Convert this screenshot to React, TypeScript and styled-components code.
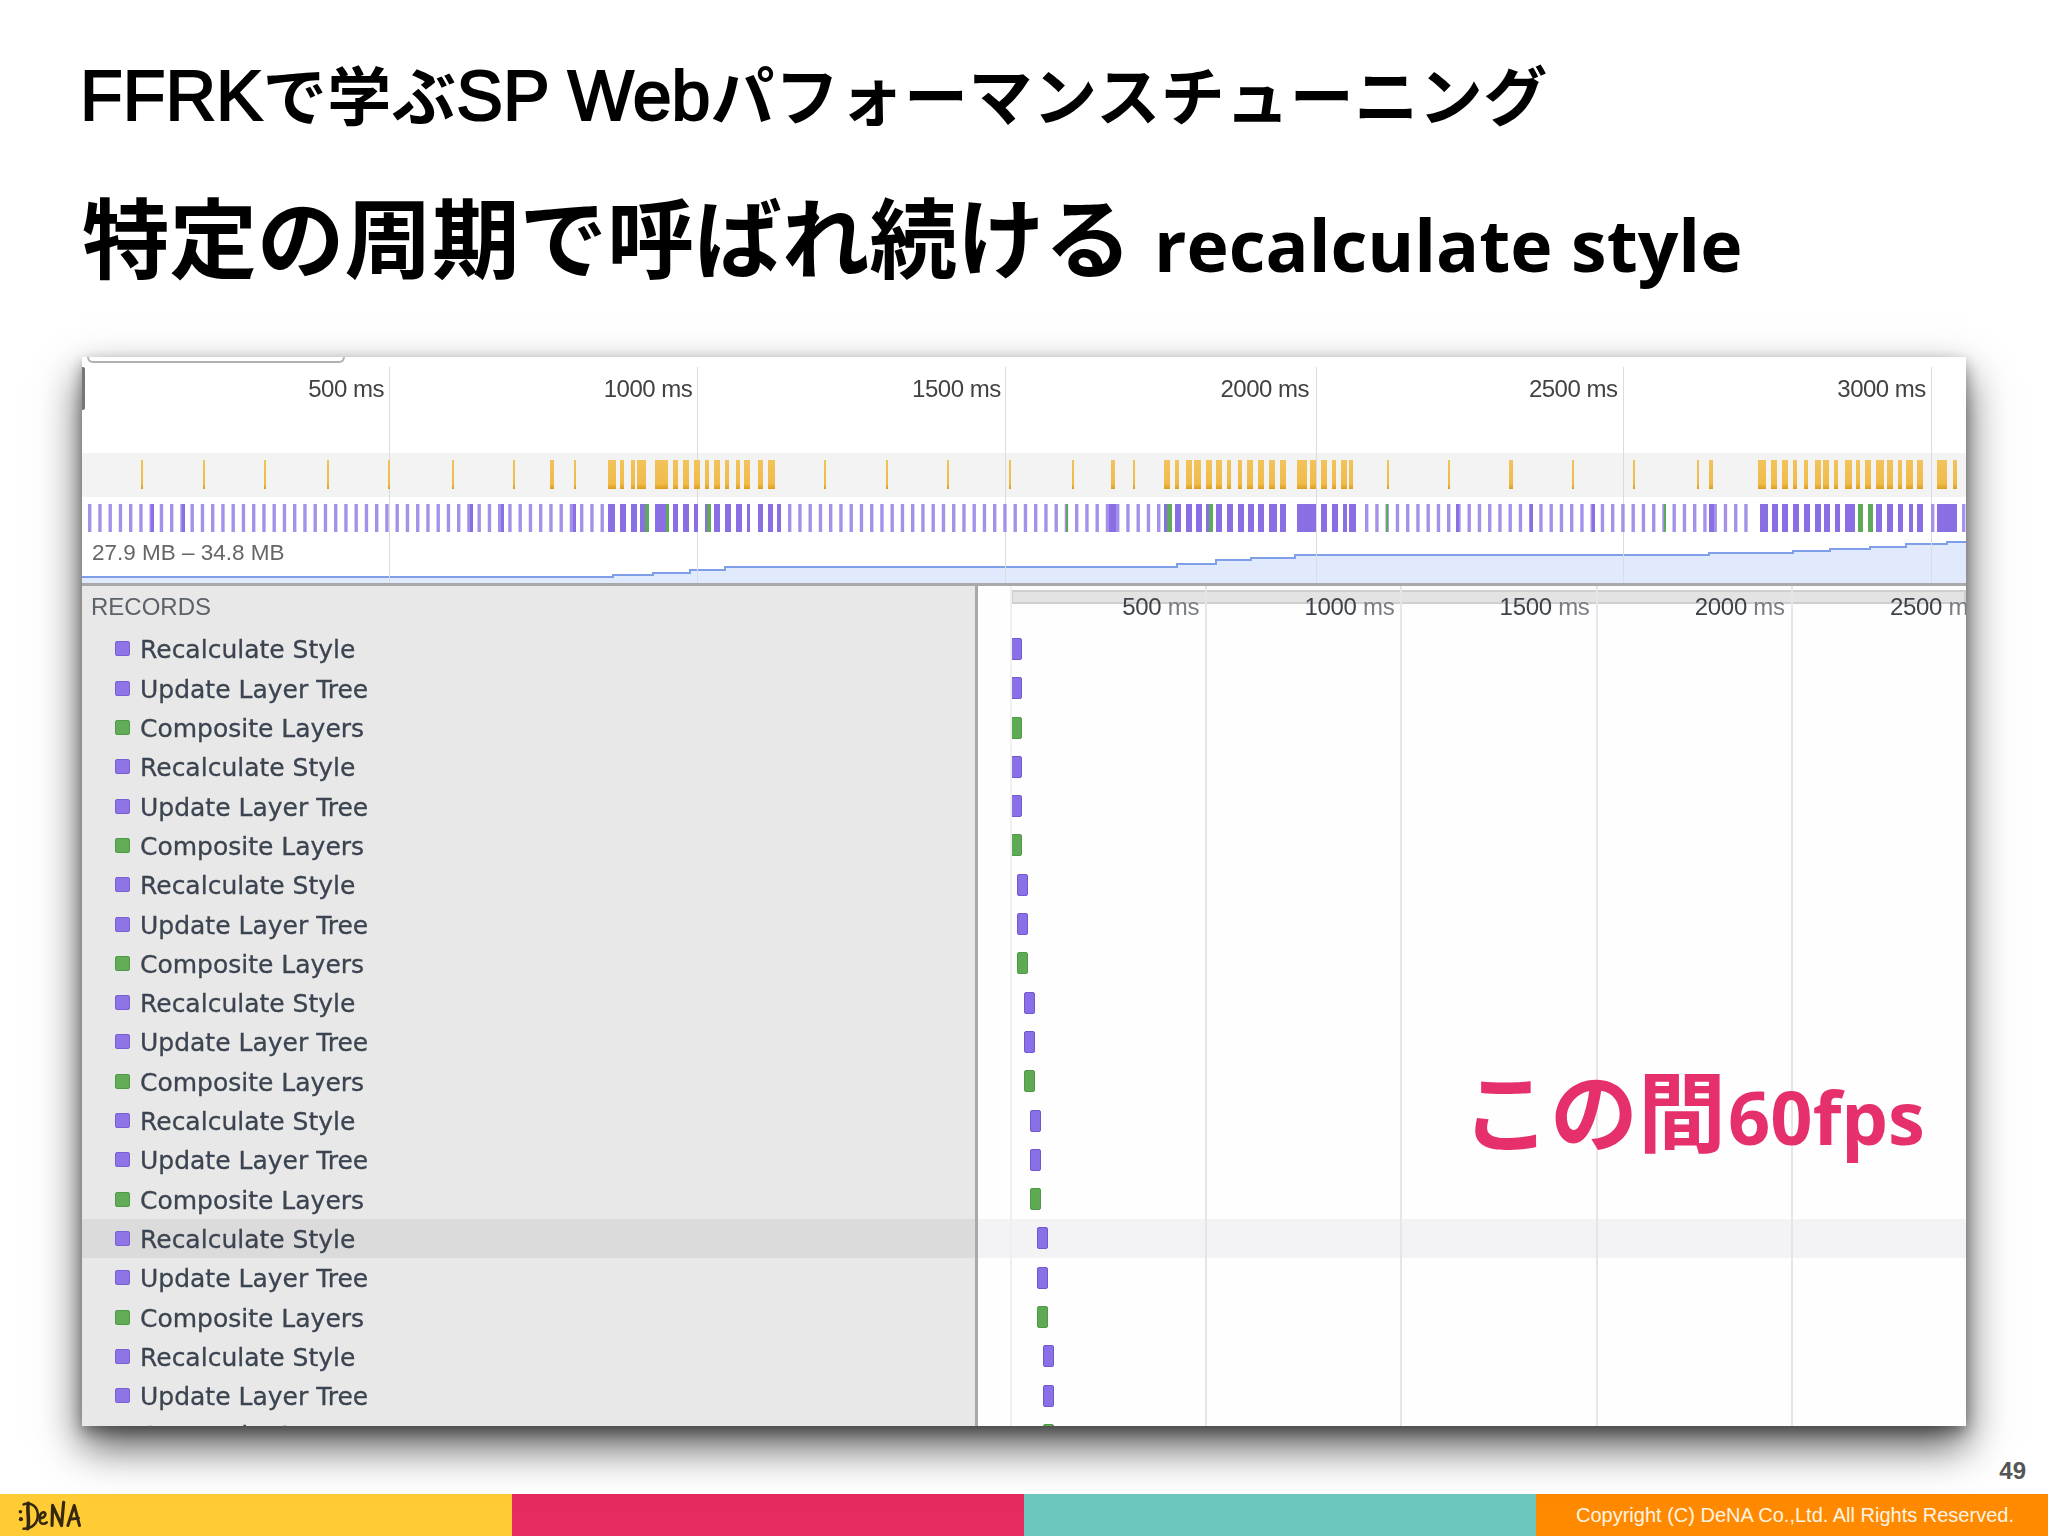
import styled, { createGlobalStyle } from 'styled-components';

const GlobalStyle = createGlobalStyle`
  html, body {
    margin: 0;
    background: #fff;
  }
`;

const JP = `"Noto Sans CJK JP", sans-serif`;

const Page = styled.div`
  width: 2048px;
  height: 1536px;
  display: flex;
  flex-direction: column;
  overflow: hidden;
  background: #fff;
`;

const Slide = styled.main`
  flex: 1;
  padding: 47px 82px 0;
  display: flex;
  flex-direction: column;
`;

const DeckTitle = styled.h1`
  margin: 0 0 42px -2px;
  height: 90px;
  font: 700 64px/90px ${JP};
  letter-spacing: 0.5px;
  color: #000;
  white-space: nowrap;
`;

const DeckLatin = styled.span`
  font: 400 70px/90px "Liberation Sans", sans-serif;
  letter-spacing: 0;
  -webkit-text-stroke: 2px #000;
`;

const SlideTitle = styled.h2`
  margin: 0 0 68px 0;
  height: 110px;
  font: 700 87.5px/110px ${JP};
  color: #000;
  white-space: nowrap;
`;

const TitleLatin = styled.span`
  font: 700 71.5px/110px "Open Sans", sans-serif;
  margin-left: 22px;
`;

const Panel = styled.section`
  position: relative;
  width: 1884px;
  height: 1069px;
  display: flex;
  flex-direction: column;
  background: #fff;
  box-shadow: 0 20px 40px rgba(0, 0, 0, 0.68), 0 6px 14px rgba(0, 0, 0, 0.35);
  filter: blur(0.45px);
  font-family: "Liberation Sans", sans-serif;
`;

const PanelClip = styled.div`
  flex: 1;
  display: flex;
  flex-direction: column;
  overflow: hidden;
`;

const TabEdge = styled.div`
  position: absolute;
  left: 5px;
  top: 0;
  width: 258px;
  height: 6px;
  border: 2px solid #b0b0b0;
  border-top: 0;
  border-radius: 0 0 6px 6px;
  box-sizing: border-box;
`;

const EdgeHandle = styled.div`
  position: absolute;
  left: 0;
  top: 10px;
  width: 3px;
  height: 43px;
  background: #777;
  border-radius: 0 2px 2px 0;
`;

const Overview = styled.div`
  position: relative;
  height: 226px;
  flex: none;
  border-bottom: 3px solid #a9a9a9;
`;

const OverviewChart = styled.svg`
  position: absolute;
  inset: 0;
  display: block;
`;

const OverviewScale = styled.div`
  position: relative;
  display: flex;
  padding-top: 21px;
`;

const OverviewTick = styled.div`
  flex: none;
  width: 308.4px;
  padding-right: 6.5px;
  box-sizing: border-box;
  text-align: right;
  font-size: 24px;
  line-height: 22px;
  letter-spacing: -0.5px;
  color: #424242;
`;

const MemoryRange = styled.div`
  position: absolute;
  left: 10px;
  top: 183px;
  font-size: 22.5px;
  line-height: 26px;
  color: #666;
`;

const Lower = styled.div`
  flex: 1;
  display: flex;
  min-height: 0;
`;

const Sidebar = styled.div`
  flex: none;
  width: 896px;
  background: #e8e8e8;
  border-right: 3px solid #a9a9a9;
  box-sizing: border-box;
`;

const RecordsHeading = styled.div`
  height: 43.35px;
  padding: 3px 0 0 9px;
  box-sizing: border-box;
  font-size: 24px;
  line-height: 36px;
  color: #5c6269;
`;

const RecordRow = styled.div<{ $selected: boolean }>`
  height: 39.3px;
  display: flex;
  align-items: center;
  gap: 10px;
  padding-left: 33px;
  background: ${(p) => (p.$selected ? '#dcdbdc' : 'transparent')};
  font: 25px "DejaVu Sans", sans-serif;
  -webkit-text-stroke: 0.3px #3b4450;
  color: #3b4450;
`;

const RecordLabel = styled.span`
  padding-top: 2px;
`;

const Swatch = styled.span<{ $kind: Kind }>`
  flex: none;
  width: 15px;
  height: 15px;
  box-sizing: border-box;
  border-radius: 2px;
  border: 1px solid ${(p) => (p.$kind === 'paint' ? '#4f9a47' : '#7860d2')};
  background: ${(p) => (p.$kind === 'paint' ? '#62ac58' : '#8e74e6')};
`;

const Timeline = styled.div`
  position: relative;
  flex: 1;
  min-width: 0;
  overflow: hidden;
  background: #fefefe;
`;

const RulerBar = styled.div`
  height: 14px;
  margin: 4px 0 25.35px 33px;
  background: #e3e3e3;
  border: 2px solid #cfcfcf;
  box-sizing: border-box;
`;

const Lane = styled.div<{ $selected: boolean }>`
  height: 39.3px;
  display: flex;
  align-items: center;
  background: ${(p) => (p.$selected ? '#f3f2f5' : 'transparent')};
`;

const EventBar = styled.span<{ $kind: Kind; $offset: number }>`
  width: 11px;
  height: 22px;
  margin-left: ${(p) => p.$offset}px;
  box-sizing: border-box;
  border-radius: 2px;
  border: 1px solid ${(p) => (p.$kind === 'paint' ? '#4f9a47' : '#7258d0')};
  background: ${(p) => (p.$kind === 'paint' ? '#5ea954' : '#8a70e6')};
`;

const TimelineGrid = styled.div`
  position: absolute;
  left: 32px;
  top: 0;
  bottom: 0;
  display: flex;
  border-left: 2px solid #efefef;
`;

const GridCell = styled.div`
  flex: none;
  width: 195.2px;
  box-sizing: border-box;
  border-right: 2px solid #e6e5e8;
  padding: 8px 6px 0 0;
  text-align: right;
  font-size: 24px;
  line-height: 26px;
  letter-spacing: -0.3px;
  color: #3f444b;
  white-space: nowrap;
`;

const GridUnit = styled.span`
  color: #7a7d84;
`;

const Callout = styled.div`
  position: absolute;
  left: 484px;
  top: 466px;
  display: flex;
  align-items: baseline;
  color: #e5306c;
  font: 700 88px/110px ${JP};
  white-space: nowrap;
`;

const CalloutLatin = styled.span`
  font: 700 74px/110px "Open Sans", sans-serif;
  margin-left: 2px;
`;

const PageNumber = styled.div`
  align-self: flex-end;
  margin: 31px -60px 0 0;
  font: 700 24px/28px "Liberation Sans", sans-serif;
  color: #555;
`;

const Footer = styled.footer`
  flex: none;
  height: 42px;
  display: grid;
  grid-template-columns: repeat(4, 512px);
`;

const FooterBlock = styled.div<{ $color: string }>`
  display: flex;
  align-items: center;
  background: ${(p) => p.$color};
`;

const Logo = styled.svg`
  display: block;
  margin: 1px 0 0 6px;
`;

const Copyright = styled.div`
  margin-left: 40px;
  font: 20px "Liberation Sans", sans-serif;
  color: #fff4e4;
  white-space: nowrap;
`;

type Kind = 'script' | 'paint';
type Span = [number, number];

const yellowSpans: Span[] = [
  [141, 143], [203, 205], [264, 266], [327, 329], [388, 390], [452, 454], [513, 515], [550, 554], [574, 576],
  [608, 616], [620, 624], [631, 635], [637, 646], [655, 668], [673, 678], [683, 689], [694, 700], [705, 709],
  [714, 720], [725, 729], [736, 740], [744, 750], [758, 763], [768, 775],
  [824, 826], [886, 888], [947, 949], [1009, 1011], [1072, 1074], [1111, 1115], [1133, 1135],
  [1164, 1170], [1175, 1179], [1186, 1192], [1194, 1201], [1206, 1212], [1216, 1222], [1227, 1231], [1238, 1242],
  [1247, 1253], [1258, 1264], [1269, 1275], [1280, 1286], [1297, 1307], [1310, 1316], [1321, 1327], [1332, 1336],
  [1341, 1347], [1349, 1353],
  [1387, 1389], [1448, 1450], [1509, 1513], [1572, 1574], [1633, 1635], [1697, 1699], [1709, 1713],
  [1758, 1766], [1771, 1777], [1782, 1788], [1793, 1797], [1804, 1808], [1815, 1821], [1823, 1829], [1834, 1838],
  [1845, 1852], [1856, 1860], [1865, 1871], [1876, 1884], [1887, 1893], [1898, 1902], [1906, 1913], [1917, 1923],
  [1937, 1947], [1953, 1957],
];

const purpleSpans: Span[] = [
  [608, 615], [620, 626], [631, 637], [640, 645], [655, 666], [673, 678], [683, 689], [694, 698], [705, 707],
  [714, 720], [725, 731], [736, 742], [747, 750], [758, 763], [768, 773], [777, 781],
  [1164, 1167], [1175, 1181], [1186, 1192], [1196, 1202], [1206, 1209], [1216, 1222], [1227, 1233], [1238, 1244],
  [1248, 1254], [1258, 1264], [1269, 1277], [1280, 1286], [1297, 1316], [1321, 1327], [1332, 1338], [1343, 1347],
  [1349, 1356],
  [1760, 1768], [1772, 1778], [1782, 1788], [1793, 1799], [1804, 1810], [1815, 1821], [1824, 1830], [1835, 1840],
  [1845, 1855], [1876, 1882], [1887, 1893], [1898, 1903], [1909, 1913], [1917, 1923], [1937, 1957],
  [151, 154], [182, 185], [470, 473], [501, 504], [573, 576], [1109, 1116], [1456, 1459], [1530, 1533], [1592, 1595], [1709, 1714],
];

const greenSpans: Span[] = [
  [645, 649], [666, 669], [707, 711], [1167, 1172], [1209, 1213], [1066, 1068], [1386, 1388], [1664, 1666], [1858, 1863], [1868, 1873],
];

// regular thin frame ticks between the busy stretches
const thinTicks = (from: number, to: number) => {
  const ticks: number[] = [];
  for (let x = from; x < to; x += 10.25) ticks.push(x);
  return ticks;
};

const purpleThin = [
  ...thinTicks(88, 606),
  ...thinTicks(788, 1160),
  ...thinTicks(1365, 1750),
  1931,
  1962,
];

const memoryLine =
  'M82 577 H613 V575 H653 V573 H690 V570 H725 V567 H1177 V564 H1216 V560 H1251 V558 H1295 V555 H1709 V553 H1793 V551 H1830 V549 H1870 V547 H1906 V544 H1947 V542 H1966';

const OverviewGraphic = () => (
  <OverviewChart width={1884} height={226} viewBox="82 357 1884 226">
    <defs>
      <linearGradient id="frameYellow" x1="0" y1="0" x2="0" y2="1">
        <stop offset="0" stopColor="#f2c35c" />
        <stop offset="0.82" stopColor="#efbb4a" />
        <stop offset="1" stopColor="#dd9d1c" />
      </linearGradient>
    </defs>
    <rect x={82} y={453} width={1884} height={44} fill="#f3f3f3" />
    <path d={`${memoryLine} V583 H82 Z`} fill="#e0eafc" />
    <path d={memoryLine} fill="none" stroke="#7f9fe8" strokeWidth={2} />
    {[389, 697, 1005, 1316, 1623, 1931].map((x) => (
      <rect key={x} x={x} y={367} width={1} height={216} fill="#dcdcdf" />
    ))}
    {yellowSpans.map(([a, b]) => (
      <rect key={a} x={a} y={460} width={b - a} height={29} fill="url(#frameYellow)" />
    ))}
    {purpleThin.map((x) => (
      <rect key={x} x={x} y={504} width={3.4} height={28} fill="#a492ea" />
    ))}
    {purpleSpans.map(([a, b]) => (
      <rect key={a} x={a} y={504} width={b - a} height={28} fill="#8a6fe4" />
    ))}
    {greenSpans.map(([a, b]) => (
      <rect key={a} x={a} y={504} width={b - a} height={28} fill="#5fa95a" />
    ))}
  </OverviewChart>
);

const DenaLogo = () => (
  <Logo width={90} height={38} viewBox="0 0 80 36" fill="none" stroke="#35280f" strokeLinecap="round" strokeLinejoin="round">
    <circle cx={11} cy={14} r={1.7} fill="#35280f" stroke="none" />
    <circle cx={11.5} cy={21} r={2} fill="#35280f" stroke="none" />
    <path strokeWidth={3.4} d="M18.5 6 C17 13 20 22 18 30" />
    <path strokeWidth={2.4} d="M14 7 C22 4 27.5 10 27.5 17 C27.5 25 22 30 14 30" />
    <path strokeWidth={2.4} d="M30 20 C34 20 36 16 33.5 14.5 C30 14 28.5 19 29.5 23 C30.5 26 34 26 36 24" />
    <path strokeWidth={3} d="M41 27 L41.5 8 L50 27 L52 5" />
    <path strokeWidth={2.8} d="M56 27 L62 8 L67 27 M58 21 L66 20" />
  </Logo>
);

const overviewLabels = ['500 ms', '1000 ms', '1500 ms', '2000 ms', '2500 ms', '3000 ms'];
const timelineLabels = ['500', '1000', '1500', '2000', '2500'];

const recordTypes: { label: string; kind: Kind }[] = [
  { label: 'Recalculate Style', kind: 'script' },
  { label: 'Update Layer Tree', kind: 'script' },
  { label: 'Composite Layers', kind: 'paint' },
];

const records = new Array(21).fill(0).map((_, i) => ({
  ...recordTypes[i % 3],
  // the first six events sit at the same spot, then every frame moves right
  offset: 33 + Math.max(0, Math.floor(i / 3) - 1) * 6.4,
  selected: i === 15,
}));

const App = () => (
  <Page>
    <GlobalStyle />
    <Slide>
      <DeckTitle>
        <DeckLatin>FFRK</DeckLatin>で学ぶ<DeckLatin>SP Web</DeckLatin>パフォーマンスチューニング
      </DeckTitle>
      <SlideTitle>
        特定の周期で呼ばれ続ける
        <TitleLatin>recalculate style</TitleLatin>
      </SlideTitle>
      <Panel>
        <PanelClip>
          <Overview>
            <OverviewGraphic />
            <OverviewScale>
              {overviewLabels.map((label) => (
                <OverviewTick key={label}>{label}</OverviewTick>
              ))}
            </OverviewScale>
            <MemoryRange>27.9 MB – 34.8 MB</MemoryRange>
          </Overview>
          <Lower>
            <Sidebar>
              <RecordsHeading>RECORDS</RecordsHeading>
              {records.map((record, i) => (
                <RecordRow key={i} $selected={record.selected}>
                  <Swatch $kind={record.kind} />
                  <RecordLabel>{record.label}</RecordLabel>
                </RecordRow>
              ))}
            </Sidebar>
            <Timeline>
              <RulerBar />
              {records.map((record, i) => (
                <Lane key={i} $selected={record.selected}>
                  <EventBar $kind={record.kind} $offset={record.offset} />
                </Lane>
              ))}
              <TimelineGrid>
                {timelineLabels.map((label) => (
                  <GridCell key={label}>
                    {label} <GridUnit>ms</GridUnit>
                  </GridCell>
                ))}
              </TimelineGrid>
              <Callout>
                この間<CalloutLatin>60fps</CalloutLatin>
              </Callout>
            </Timeline>
          </Lower>
        </PanelClip>
        <TabEdge />
        <EdgeHandle />
      </Panel>
      <PageNumber>49</PageNumber>
    </Slide>
    <Footer>
      <FooterBlock $color="#ffcc36">
        <DenaLogo />
      </FooterBlock>
      <FooterBlock $color="#e72a60" />
      <FooterBlock $color="#6cc7bf" />
      <FooterBlock $color="#ff8a00">
        <Copyright>Copyright (C) DeNA Co.,Ltd. All Rights Reserved.</Copyright>
      </FooterBlock>
    </Footer>
  </Page>
);

export default App;
